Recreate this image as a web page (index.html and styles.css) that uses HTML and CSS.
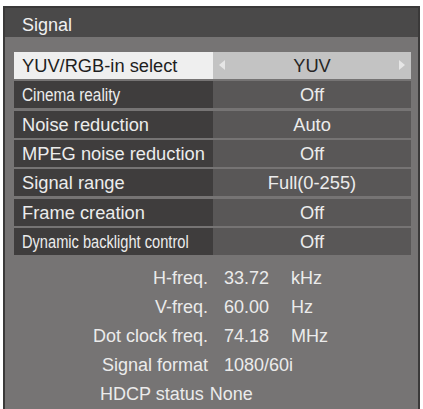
FILE: index.html
```html
<!DOCTYPE html>
<html>
<head>
<meta charset="utf-8">
<link rel="stylesheet" href="styles.css">
</head>
<body>
<div class="panel">
  <div class="title">Signal</div>
  <div class="rows">
    <div class="row active">
      <div class="label">YUV/RGB-in select</div>
      <div class="value"><span class="arrow left"></span>YUV<span class="arrow right"></span></div>
    </div>
    <div class="row">
      <div class="label"><span class="narrow n1">Cinema reality</span></div>
      <div class="value">Off</div>
    </div>
    <div class="row">
      <div class="label">Noise reduction</div>
      <div class="value">Auto</div>
    </div>
    <div class="row">
      <div class="label">MPEG noise reduction</div>
      <div class="value">Off</div>
    </div>
    <div class="row">
      <div class="label">Signal range</div>
      <div class="value">Full(0-255)</div>
    </div>
    <div class="row">
      <div class="label">Frame creation</div>
      <div class="value">Off</div>
    </div>
    <div class="row">
      <div class="label"><span class="narrow n2">Dynamic backlight control</span></div>
      <div class="value">Off</div>
    </div>
  </div>
  <div class="info">
    <div class="ilabel">H-freq.</div><div class="ival">33.72</div><div class="iunit">kHz</div>
    <div class="ilabel">V-freq.</div><div class="ival">60.00</div><div class="iunit">Hz</div>
    <div class="ilabel">Dot clock freq.</div><div class="ival">74.18</div><div class="iunit">MHz</div>
    <div class="ilabel">Signal format</div><div class="ival">1080/60i</div><div class="iunit"></div>
  </div>
  <div class="hdcp"><span class="hlabel">HDCP status</span><span class="hval">None</span></div>
</div>
</body>
</html>
```

FILE: styles.css
```css
html, body {
  margin: 0;
  padding: 0;
  background: #ffffff;
}
body {
  width: 423px;
  height: 409px;
  overflow: hidden;
  font-family: "Liberation Sans", Arial, sans-serif;
}
.panel {
  margin: 6px 3px 0 3px;
  height: 403px;
  box-sizing: border-box;
  border: 2px solid #3a3939;
  border-bottom: none;
  background: #767474;
  color: #ececec;
  font-size: 18px;
}
.title {
  height: 29px;
  background: #4a4949;
  padding-left: 17px;
  line-height: 35px;
  color: #f0f0f0;
  overflow: hidden;
}
.rows {
  padding: 15px 7px 0 9px;
  display: flex;
  flex-direction: column;
  gap: 2.33px;
  font-size: 18.3px;
}
.row {
  display: grid;
  grid-template-columns: 199px 1fr;
  height: 27px;
}
.label {
  background: #3f3d3d;
  padding-left: 8px;
  line-height: 27px;
  white-space: nowrap;
  overflow: hidden;
}
.value {
  background: #595757;
  text-align: center;
  line-height: 27px;
  position: relative;
}
.row.active .label {
  background: #efefef;
  color: #1e1e1e;
}
.row.active .value {
  background: #c3c3c3;
  color: #262626;
}
.arrow {
  position: absolute;
  top: 8px;
  width: 0;
  height: 0;
  border-top: 5.5px solid transparent;
  border-bottom: 5.5px solid transparent;
}
.arrow.left {
  left: 6px;
  border-right: 6px solid #e6e6e6;
}
.arrow.right {
  right: 6px;
  border-left: 6px solid #e6e6e6;
}
.narrow {
  display: inline-block;
  transform-origin: left center;
}
.n1 {
  transform: scaleX(0.84);
}
.n2 {
  transform: scaleX(0.80);
}
.info {
  margin-top: 9px;
  display: grid;
  grid-template-columns: 203px 83px auto;
  line-height: 29px;
  color: #ebebeb;
}
.ilabel {
  text-align: right;
}
.ival {
  padding-left: 16px;
}
.hdcp {
  line-height: 29px;
  margin-top: 0;
  padding-left: 95px;
  color: #ebebeb;
}
.hval {
  margin-left: 6px;
}
```
